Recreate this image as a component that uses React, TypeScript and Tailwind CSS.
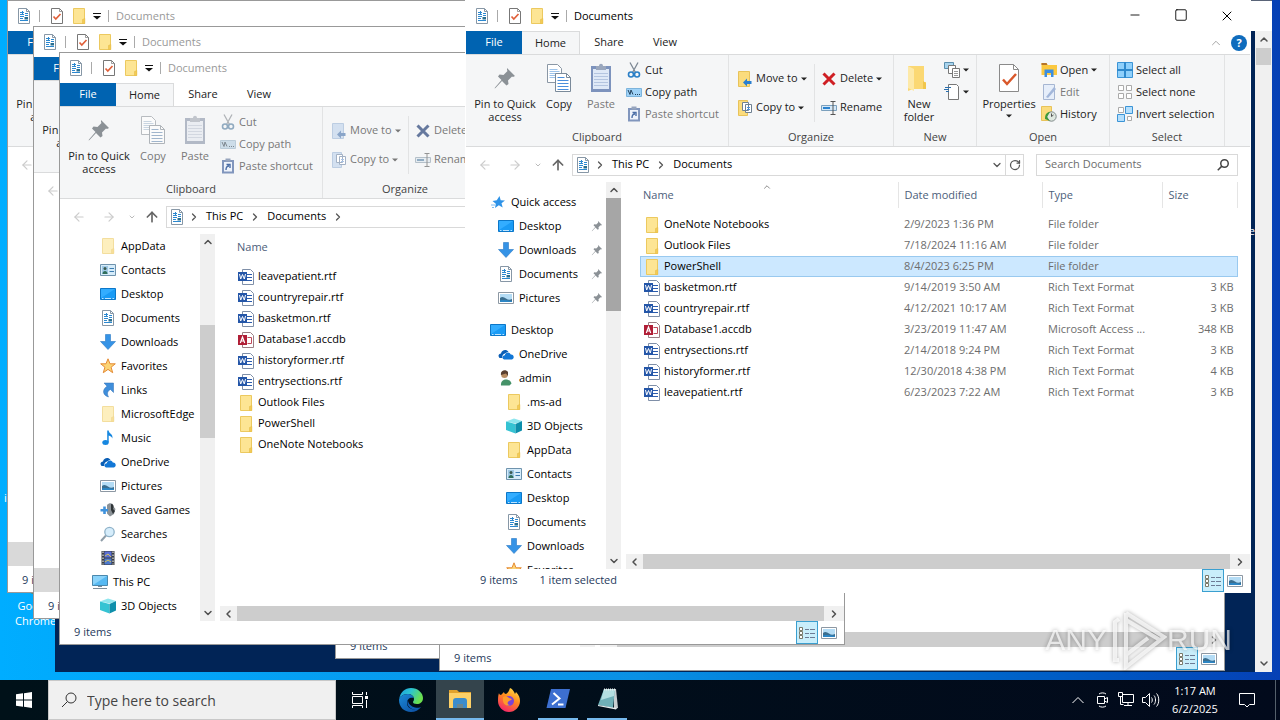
import React from 'react';
import { ChevronDown, ChevronLeft, ChevronRight, ChevronUp, Minus, Square, X, ArrowLeft, ArrowRight, ArrowUp, RotateCw } from 'lucide-react';

type IconProps = { className?: string };

interface FileItem {
  name: string;
  date: string;
  type: string;
  size: string;
  kind: 'folder' | 'word' | 'access';
}

interface NavItem {
  label: string;
  icon: React.FC<IconProps>;
  level: 0 | 1 | 2;
  pinned?: boolean;
  gap?: boolean;
}

/* ---------- icons ---------- */

const FolderIcon: React.FC<IconProps> = ({ className = 'h-4 w-4' }) => (
  <svg viewBox="0 0 16 16" className={className}>
    <path d="M2.500.500h11v15h-11z" fill="#fde594" stroke="#ecc95f" />
    <path d="M11.500 15.500v-4l2.300-1v5z" fill="#f4cb55" stroke="#e6bd4a" strokeWidth=".6" />
  </svg>
);

const PaleFolderIcon: React.FC<IconProps> = () => <FolderIcon className="h-4 w-4 opacity-60" />;

const DocumentIcon: React.FC<IconProps> = ({ className = 'h-4 w-4' }) => (
  <svg viewBox="0 0 16 16" className={className}>
    <path d="M2.5.5h8l3 3v12h-11z" fill="#fff" stroke="#8797a6" />
    <path d="M10.5.5v3h3" fill="none" stroke="#8797a6" />
    <path d="M4 4.500h4M6.500 3v4M4 6.500h4M4 8.500h4M4 10.500h3M4 12.500h8" stroke="#2b88d0" />
    <path d="M9 5.500h3M9 7.500h3" stroke="#2b88d0" />
    <path d="M8.500 9h3.500v2.500H8.500z" fill="#2a6f90" />
  </svg>
);

const CheckPageIcon: React.FC<IconProps> = ({ className = 'h-4 w-4' }) => (
  <svg viewBox="0 0 16 16" className={className}>
    <path d="M2.500.500h8l3 3v12h-11z" fill="#fff" stroke="#777" />
    <path d="M10.500.500v3h3" fill="none" stroke="#777" strokeWidth=".7" />
    <path d="m4.500 8.500 2.300 2.500L11.500 6" fill="none" stroke="#e0603a" strokeWidth="1.700" />
  </svg>
);

const PropertiesIcon: React.FC<IconProps> = () => (
  <svg viewBox="0 0 22 30" className="h-[30px] w-[22px]">
    <path d="M1.500 1.500h14l5 5v22h-19z" fill="#fff" stroke="#8a8a8a" />
    <path d="M15.500 1.500v5h5" fill="none" stroke="#8a8a8a" />
    <path d="m5 16.500 4 4.500 9-10" fill="none" stroke="#d9582b" strokeWidth="2.500" />
  </svg>
);

const DesktopIcon: React.FC<IconProps> = () => (
  <svg viewBox="0 0 16 16" className="h-4 w-4">
    <path d="M.5 2.500h15v11H.5z" fill="#1a9bf5" stroke="#0c77c8" />
    <path d="M1 3h14L1 12z" fill="#33adff" />
    <path d="M2 12.500h1.500M5 12.500h6M12.500 12.500H14" stroke="#bfe4ff" />
  </svg>
);

const DownloadsIcon: React.FC<IconProps> = () => (
  <svg viewBox="0 0 16 16" className="h-4 w-4">
    <path d="M5.500.500h5v7h5L8 15.500.500 7.500h5z" fill="#3593e6" stroke="#2a78c4" strokeWidth=".6" />
  </svg>
);

const PicturesIcon: React.FC<IconProps> = () => (
  <svg viewBox="0 0 16 16" className="h-4 w-4">
    <path d="M.5 2.500h15v11H.5z" fill="#fff" stroke="#8d98a3" />
    <path d="M2 4h12v8H2z" fill="#b4dcf5" />
    <path d="M2 8c2-2 4-1 6 .5S12 10 14 9v3H2z" fill="#3b6e8f" />
    <path d="M2 10.500c4-1 8 0 12 .5v1H2z" fill="#2c86c5" />
  </svg>
);

const ContactsIcon: React.FC<IconProps> = () => (
  <svg viewBox="0 0 16 16" className="h-4 w-4">
    <path d="M.5 2.500h15v11H.5z" fill="#d6ecfa" stroke="#6f93ad" />
    <path d="M2 4h6v8H2z" fill="#9fc9e6" />
    <circle cx="5" cy="6.500" r="1.500" fill="#3a5a50" />
    <path d="M2.500 12c0-4 5-4 5 0z" fill="#2f6e5a" />
    <path d="M9.500 6.500h4.500M9.500 9.500h4.500" stroke="#3d7db0" />
  </svg>
);

const FavoritesIcon: React.FC<IconProps> = () => (
  <svg viewBox="0 0 16 16" className="h-4 w-4">
    <path d="m8 .8 2 5h5.300l-4.200 3.400 1.600 5.500L8 11.400l-4.700 3.300 1.600-5.500L.7 5.800H6z" fill="#fcd475" stroke="#e48a35" />
  </svg>
);

const LinksIcon: React.FC<IconProps> = () => (
  <svg viewBox="0 0 16 16" className="h-4 w-4">
    <path d="M4 1h9.500v9.500l-3-3C7 9 7 12 8.500 15 3 13.500 1.500 8 7 4.200z" fill="#3f8edb" stroke="#2f6fb5" strokeWidth=".5" />
  </svg>
);

const MusicIcon: React.FC<IconProps> = () => (
  <svg viewBox="0 0 16 16" className="h-4 w-4">
    <ellipse cx="5.500" cy="12.500" rx="3.200" ry="2.500" fill="#1687e0" />
    <path d="M7.200 12.500V.5h1.500c0 3 4.800 3.500 3.600 8-.5-2-2-2.500-3.600-3v7z" fill="#1687e0" />
  </svg>
);

const OneDriveIcon: React.FC<IconProps> = () => (
  <svg viewBox="0 0 16 16" className="h-4 w-4">
    <path d="M1.500 12C-.5 10 .8 7.500 3 7.500 3.500 4 8 2.500 10.500 5.500L6 8c-1.500 1-2 2.500-1.500 4z" fill="#0a5eb5" />
    <path d="M6 13.500c-2.500-1-1.500-4.200.8-4.300C7.500 6 11.500 5.500 12.800 8.500c3.200-.3 4 4 1.200 5z" fill="#1277d6" />
  </svg>
);

const SavedGamesIcon: React.FC<IconProps> = () => (
  <svg viewBox="0 0 16 16" className="h-4 w-4">
    <path d="M7 3c2-3 7-2 6 1l2.500 3-1.500 5-4 2.500-3-3z" fill="#8b9297" />
    <path d="M11 2c3 0 3 3 2 5l2 2-2 3-2-4z" fill="#2f3437" />
    <path d="M4.500 4.500v7.500M.5 8.300h7.500" stroke="#3f92dc" strokeWidth="2.600" />
  </svg>
);

const SearchesIcon: React.FC<IconProps> = () => (
  <svg viewBox="0 0 16 16" className="h-4 w-4">
    <path d="M1 15 6 9.500" stroke="#8f9da8" strokeWidth="2" />
    <circle cx="9.500" cy="6" r="4.700" fill="#d6edfb" stroke="#8fb2c9" strokeWidth="1.300" />
  </svg>
);

const VideosIcon: React.FC<IconProps> = () => (
  <svg viewBox="0 0 16 16" className="h-4 w-4">
    <path d="M1.500 1h13v14h-13z" fill="#3a3f45" />
    <path d="M4.500 1.500h7v6h-7z" fill="#5a6fd6" />
    <path d="M4.500 8.500h7v6h-7z" fill="#4d79cf" />
    <path d="m5 6 3-2 3 3M5 12l3-2 3 2" stroke="#d6c257" fill="none" />
    <path d="M3 1.500v13M13 1.500v13" stroke="#fff" strokeDasharray="1.500 1.500" />
  </svg>
);

const ThisPcIcon: React.FC<IconProps> = () => (
  <svg viewBox="0 0 16 16" className="h-4 w-4">
    <path d="M.5 1.500h15v10H.5z" fill="#57b9f2" stroke="#4a88ad" />
    <path d="M1 2h14L1 11z" fill="#8ad3fa" />
    <path d="M6 12.500h4M1 14.500h14" stroke="#7d8d99" />
  </svg>
);

const CubeIcon: React.FC<IconProps> = () => (
  <svg viewBox="0 0 16 16" className="h-4 w-4">
    <path d="M0 3.500 8 .5l8 2.500-6 2.500z" fill="#8fe6ee" />
    <path d="M0 3.500 9.500 6v9.500L0 12z" fill="#35c3d3" />
    <path d="M9.500 6 16 3v9.500l-6.500 3z" fill="#0e8fab" />
  </svg>
);

const UserIcon: React.FC<IconProps> = () => (
  <svg viewBox="0 0 16 16" className="h-4 w-4">
    <path d="M3 15.500C2 8 12 7.500 13.500 13.500l-2 2z" fill="#459268" />
    <circle cx="6.500" cy="4.800" r="3.300" fill="#b98d62" />
    <path d="M3 5C2 0 8-1 10 2v4L8 3.500z" fill="#5a4030" />
  </svg>
);

const StarIcon: React.FC<IconProps> = () => (
  <svg viewBox="0 0 16 16" className="h-4 w-4">
    <path d="m9.500 2 1.200 4.200 4.300.3-3.500 2.700 1.200 4.300-3.900-2.200L5 14l.8-4.300L2.500 7l4.300-.7z" fill="#2e93e8" />
    <path d="M1 11h4M2 13.500h2" stroke="#7dbcf0" />
  </svg>
);

const PinIcon: React.FC<IconProps> = ({ className = 'h-6 w-6' }) => (
  <svg viewBox="0 0 24 24" className={className}>
    <path d="m14 2 8 8-2 1-1-.500-4 4 .5 3.500-2 1.500L9 15l-6.500 7-1 .500.500-1L8.500 14 5 10.500 6.500 8.500l4 .5 4-4-.5-1z" fill="#8b9196" />
  </svg>
);

const CopyIcon: React.FC<IconProps> = () => (
  <svg viewBox="0 0 26 30" className="h-[30px] w-[26px]">
    <path d="M1.500 1.500h10l4 4v14h-14z" fill="#fff" stroke="#8a97a5" />
    <path d="M3.500 6.500h8M3.500 8.500h10M3.500 10.500h10M3.500 12.500h10M3.500 14.500h10" stroke="#9dc3ea" />
    <path d="M9.500 10.500h11l4 4v14h-15z" fill="#fff" stroke="#7a8a9a" />
    <path d="M20.500 10.500v4h4" fill="none" stroke="#7a8a9a" />
    <path d="M11.500 14.500h7M11.500 17.500h11M11.500 20.500h11M11.500 23.500h11M11.500 26.500h11" stroke="#4a8fdc" />
  </svg>
);

const PasteIcon: React.FC<IconProps> = () => (
  <svg viewBox="0 0 22 30" className="h-[30px] w-[22px]">
    <path d="M1 3h20v26H1z" fill="#7d93bd" />
    <path d="M3 6h16v20H3z" fill="#dfe9f7" />
    <path d="M4 10.500h14M4 13.500h14M4 16.500h14M4 19.500h14M4 22.500h14" stroke="#b4c5e0" />
    <path d="M6 3h3c0-3 4-3 4 0h3v4H6z" fill="#9aa7bd" />
  </svg>
);

const CutIcon: React.FC<IconProps> = () => (
  <svg viewBox="0 0 16 16" className="h-4 w-4" fill="none">
    <path d="m4 .5 5.500 10M12 .5 6.500 10.500" stroke="#7d8894" strokeWidth="1.300" />
    <circle cx="5" cy="12.500" r="2.500" stroke="#2a7fc6" strokeWidth="1.600" />
    <circle cx="11" cy="12.500" r="2.500" stroke="#2a7fc6" strokeWidth="1.600" />
  </svg>
);

const CopyPathIcon: React.FC<IconProps> = () => (
  <svg viewBox="0 0 16 16" className="h-4 w-4">
    <path d="M.5 4.500h15v8H.5z" fill="#9fd2f7" stroke="#7db4dc" />
    <path d="m2 6 2 4.500L5 6l2 4.500M9 10.500h1M11 10.500h1M13 10.500h1" stroke="#23425c" fill="none" />
  </svg>
);

const PasteShortcutIcon: React.FC<IconProps> = () => (
  <svg viewBox="0 0 16 16" className="h-4 w-4">
    <path d="M2 2h12v13.500H2z" fill="#8196bd" />
    <path d="M4 4h8v9.500H4z" fill="#eef3fb" />
    <path d="M5.500.500h5v3h-5z" fill="#97a5bd" />
    <path d="M6 12c0-3 1-4 3-4M6.500 6.500H10V10" stroke="#4a6da6" strokeWidth="1.400" fill="none" />
  </svg>
);

const MoveToIcon: React.FC<{ off: boolean }> = ({ off }) => (
  <svg viewBox="0 0 16 16" className="h-4 w-4">
    <path d="M1.500.500h11v15h-11z" fill={off ? '#d3e0f0' : '#fbdc7d'} stroke={off ? '#bccde2' : '#e8c35a'} />
    <path d="m6 11.500 4-4v2.500h4.500v3H10v2.500z" fill={off ? '#8aa5c9' : '#2a7fd0'} />
  </svg>
);

const CopyToIcon: React.FC<{ off: boolean }> = ({ off }) => (
  <svg viewBox="0 0 16 16" className="h-4 w-4">
    <path d="M1.500.500h9v15h-9z" fill={off ? '#d3e0f0' : '#fbdc7d'} stroke={off ? '#bccde2' : '#e8c35a'} />
    <path d="M5.500 2.500h6v8h-6zM8.500 4.500h6v8h-6z" fill="#fff" stroke={off ? '#a3b1c4' : '#6f8192'} />
    <path d="M10 7.500h3M10 9.500h3" stroke={off ? '#a9c3e6' : '#4a8fdc'} />
  </svg>
);

const DeleteIcon: React.FC<{ off: boolean }> = ({ off }) => (
  <svg viewBox="0 0 16 16" className="h-4 w-4">
    <path d="m2.500 2.500 11 11M13.500 2.500l-11 11" stroke={off ? '#66799e' : '#cf1f24'} strokeWidth="3" />
  </svg>
);

const RenameIcon: React.FC<IconProps> = () => (
  <svg viewBox="0 0 16 16" className="h-4 w-4" fill="none">
    <path d="M.5 5.500h15v5H.5z" fill="#d4e8f8" stroke="#7ba0bd" />
    <path d="M2 7h7v2H2z" fill="#2a82cf" />
    <path d="M9.500 1.500h5M12 1.500v13M9.500 14.500h5" stroke="#555" />
  </svg>
);

const NewFolderIcon: React.FC<IconProps> = () => (
  <svg viewBox="0 0 22 28" className="mr-1 h-7 w-[22px]">
    <path d="M2 2h16v16h2v7H7L2 27z" fill="#fbd873" />
    <path d="M2 2l6 3v22l-6-3z" fill="#fde9a8" />
    <path d="M17 17l3 2v6h-3z" fill="#f1c64c" />
  </svg>
);

const NewItemIcon: React.FC<IconProps> = () => (
  <svg viewBox="0 0 16 16" className="h-4 w-4">
    <path d="M.5.500h9v6h-9z" fill="#a8d4ee" stroke="#5b8fae" />
    <path d="M4.500 3.500h7v8h-7z" fill="#fff" stroke="#777" />
    <path d="M8.500 6.500h7v9h-7z" fill="#fff" stroke="#777" />
    <path d="M10 9.500h4M10 11.500h4M10 13.500h4" stroke="#999" />
  </svg>
);

const EasyAccessIcon: React.FC<IconProps> = () => (
  <svg viewBox="0 0 16 16" className="h-4 w-4">
    <path d="M4.500.500h8l2 2v13h-10z" fill="#fff" stroke="#777" />
    <path d="M1 3.500h6M0 5.500h5M2 7.500h3" stroke="#2a6fae" />
  </svg>
);

const OpenIcon: React.FC<IconProps> = () => (
  <svg viewBox="0 0 16 16" className="h-4 w-4">
    <path d="M.5 1h5l1 2H16v10H.5z" fill="#fbc83f" />
    <path d="M.5 1h5l1 2h-6z" fill="#b5742a" />
    <path d="M3.500 15V7.500h9V15H10v-4H6v4z" fill="#3b8de0" />
  </svg>
);

const EditIcon: React.FC<IconProps> = () => (
  <svg viewBox="0 0 16 16" className="h-4 w-4">
    <path d="M2.500.500h11v15h-11z" fill="#e6eefa" stroke="#a6b6d2" />
    <path d="m5 13 8-10 2 2-8 9z" fill="#a3b7da" />
  </svg>
);

const HistoryIcon: React.FC<IconProps> = () => (
  <svg viewBox="0 0 16 16" className="h-4 w-4">
    <path d="M.5.500h10v14H.5z" fill="#fbdc7d" stroke="#e8c35a" />
    <circle cx="10.500" cy="10.500" r="4.700" fill="#dfe8e0" stroke="#7f8a8a" />
    <path d="M10.500 7.500v3l2-1.500" stroke="#555" fill="none" />
    <path d="M4 13c0-5 2-7 5-7L6 11l3 4z" fill="#3f9a3b" />
  </svg>
);

const SelectAllIcon: React.FC<IconProps> = () => (
  <svg viewBox="0 0 16 16" className="h-4 w-4">
    <path d="M.5.500h15v15H.5z" fill="#8fd0fb" stroke="#3b94d6" />
    <path d="M8 0v16M0 8h16" stroke="#2f89cc" strokeWidth="2" />
  </svg>
);

const SelectNoneIcon: React.FC<IconProps> = () => (
  <svg viewBox="0 0 16 16" className="h-4 w-4">
    <path d="M1.500 1.500h5v5h-5zM9.500 1.500h5v5h-5zM1.500 9.500h5v5h-5zM9.500 9.500h5v5h-5z" fill="#fff" stroke="#aaa" />
  </svg>
);

const InvertIcon: React.FC<IconProps> = () => (
  <svg viewBox="0 0 16 16" className="h-4 w-4">
    <path d="M1.500 1.500h5v5h-5zM10.500 10.500h4v4h-4z" fill="#fff" stroke="#aaa" />
    <path d="M8.500.500h7v7h-7zM.5 8.500h7v7h-7z" fill="#b5dffc" stroke="#3b94d6" />
  </svg>
);

const WordIcon: React.FC<IconProps> = () => (
  <svg viewBox="0 0 16 16" className="h-4 w-4">
    <path d="M4.500.500h8l3 3v12h-11z" fill="#fff" stroke="#7f8fa8" />
    <path d="M9 5.500h5M9 8.500h5M9 11.500h5" stroke="#2b5cad" />
    <path d="M0 3h9v9H0z" fill="#2456a8" />
    <path d="m1.500 5 1.200 5 1.800-4.500L6.300 10l1.200-5" stroke="#fff" fill="none" />
  </svg>
);

const AccessIcon: React.FC<IconProps> = () => (
  <svg viewBox="0 0 16 16" className="h-4 w-4">
    <path d="M4.500.500h8l3 3v12h-11z" fill="#fff" stroke="#9b8085" />
    <path d="M9.500 5.500h4v6h-4" fill="none" stroke="#c04a5a" />
    <path d="M0 3h9v10H0z" fill="#b01e36" />
    <path d="m2.300 11 2.200-6 2.200 6M3 9h3" stroke="#fff" fill="none" strokeWidth="1.200" />
  </svg>
);

const DetailsViewIcon: React.FC<IconProps> = () => (
  <svg viewBox="0 0 16 14" className="h-3.5 w-4">
    <path d="M.5 1.500h3v3h-3zM.5 5.500h3v3h-3zM.5 9.500h3v3h-3z" fill="#fff" stroke="#7a7a6a" />
    <path d="M6 3.500h4M11 3.500h5M6 7.500h4M11 7.500h5M6 11.500h4M11 11.500h5" stroke="#6d7b94" />
  </svg>
);

const MagnifierIcon: React.FC<{ className: string; width?: number }> = ({ className, width = 1 }) => (
  <svg viewBox="0 0 16 16" className={className} fill="none" stroke="currentColor" strokeWidth={width}>
    <circle cx="10" cy="6" r="5" />
    <path d="M6.500 9.500 1 15" />
  </svg>
);

const Caret: React.FC<IconProps> = () => (
  <svg viewBox="0 0 6 4" className="h-1 w-1.5 shrink-0">
    <path d="M0 .5h6L3 3.500z" fill="currentColor" />
  </svg>
);

/* ---------- data ---------- */

const files: FileItem[] = [
  { name: 'OneNote Notebooks', date: '2/9/2023 1:36 PM', type: 'File folder', size: '', kind: 'folder' },
  { name: 'Outlook Files', date: '7/18/2024 11:16 AM', type: 'File folder', size: '', kind: 'folder' },
  { name: 'PowerShell', date: '8/4/2023 6:25 PM', type: 'File folder', size: '', kind: 'folder' },
  { name: 'basketmon.rtf', date: '9/14/2019 3:50 AM', type: 'Rich Text Format', size: '3 KB', kind: 'word' },
  { name: 'countryrepair.rtf', date: '4/12/2021 10:17 AM', type: 'Rich Text Format', size: '3 KB', kind: 'word' },
  { name: 'Database1.accdb', date: '3/23/2019 11:47 AM', type: 'Microsoft Access ...', size: '348 KB', kind: 'access' },
  { name: 'entrysections.rtf', date: '2/14/2018 9:24 PM', type: 'Rich Text Format', size: '3 KB', kind: 'word' },
  { name: 'historyformer.rtf', date: '12/30/2018 4:38 PM', type: 'Rich Text Format', size: '4 KB', kind: 'word' },
  { name: 'leavepatient.rtf', date: '6/23/2023 7:22 AM', type: 'Rich Text Format', size: '3 KB', kind: 'word' },
];

const unsortedFiles = [8, 4, 3, 5, 7, 6, 1, 2, 0].map((i) => files[i]);

const fileIcons = { folder: FolderIcon, word: WordIcon, access: AccessIcon };

const quickNav: NavItem[] = [
  { label: 'Quick access', icon: StarIcon, level: 0 },
  { label: 'Desktop', icon: DesktopIcon, level: 1, pinned: true },
  { label: 'Downloads', icon: DownloadsIcon, level: 1, pinned: true },
  { label: 'Documents', icon: DocumentIcon, level: 1, pinned: true },
  { label: 'Pictures', icon: PicturesIcon, level: 1, pinned: true },
  { label: 'Desktop', icon: DesktopIcon, level: 0, gap: true },
  { label: 'OneDrive', icon: OneDriveIcon, level: 1 },
  { label: 'admin', icon: UserIcon, level: 1 },
  { label: '.ms-ad', icon: FolderIcon, level: 2 },
  { label: '3D Objects', icon: CubeIcon, level: 2 },
  { label: 'AppData', icon: FolderIcon, level: 2 },
  { label: 'Contacts', icon: ContactsIcon, level: 2 },
  { label: 'Desktop', icon: DesktopIcon, level: 2 },
  { label: 'Documents', icon: DocumentIcon, level: 2 },
  { label: 'Downloads', icon: DownloadsIcon, level: 2 },
  { label: 'Favorites', icon: FavoritesIcon, level: 2 },
];

const userNav: NavItem[] = [
  { label: 'AppData', icon: PaleFolderIcon, level: 2 },
  { label: 'Contacts', icon: ContactsIcon, level: 2 },
  { label: 'Desktop', icon: DesktopIcon, level: 2 },
  { label: 'Documents', icon: DocumentIcon, level: 2 },
  { label: 'Downloads', icon: DownloadsIcon, level: 2 },
  { label: 'Favorites', icon: FavoritesIcon, level: 2 },
  { label: 'Links', icon: LinksIcon, level: 2 },
  { label: 'MicrosoftEdge', icon: PaleFolderIcon, level: 2 },
  { label: 'Music', icon: MusicIcon, level: 2 },
  { label: 'OneDrive', icon: OneDriveIcon, level: 2 },
  { label: 'Pictures', icon: PicturesIcon, level: 2 },
  { label: 'Saved Games', icon: SavedGamesIcon, level: 2 },
  { label: 'Searches', icon: SearchesIcon, level: 2 },
  { label: 'Videos', icon: VideosIcon, level: 2 },
  { label: 'This PC', icon: ThisPcIcon, level: 1 },
  { label: '3D Objects', icon: CubeIcon, level: 2 },
];

const indents = ['pl-6', 'pl-8', 'pl-10'];

/* ---------- ribbon ---------- */

const BigButton: React.FC<{ icon: React.ReactNode; label: string; className: string; disabled?: boolean; caret?: boolean }> = ({ icon, label, className, disabled, caret }) => (
  <button className={`flex flex-col items-center pt-[7px] ${className} ${disabled ? 'text-[#787878]' : ''}`}>
    <span className="flex h-8 items-center justify-center">{icon}</span>
    <span className="mt-[3px] text-center leading-[13px]">{label}</span>
    {caret && <span className="mt-1"><Caret /></span>}
  </button>
);

const SmallButton: React.FC<{ icon: React.ReactNode; label?: string; disabled?: boolean; caret?: boolean; tall?: boolean }> = ({ icon, label, disabled, caret, tall }) => (
  <button aria-label={label || 'New item'} className={`flex items-center gap-[3px] whitespace-nowrap ${tall ? 'h-[29px]' : 'h-[22px]'} ${disabled ? 'text-[#787878]' : ''}`}>
    <span className="shrink-0">{icon}</span>
    {label}
    {caret && <Caret />}
  </button>
);

const Group: React.FC<{ label: string; className: string; children: React.ReactNode }> = ({ label, className, children }) => (
  <div className={`flex h-[91px] shrink-0 flex-col border-r border-[#e2e3e4] ${className}`}>
    <div className="flex flex-1">{children}</div>
    <div className="h-[17px] text-center leading-4 text-[#444]">{label}</div>
  </div>
);

const Ribbon: React.FC<{ active: boolean; covered: boolean }> = ({ active, covered }) => {
  const off = !active;
  const faded = off ? 'block opacity-60 saturate-50' : '';

  return (
    <div className="flex shrink-0 overflow-hidden border-y border-[#dadbdc] bg-[#f5f6f7] text-[#222]">
      <Group label="Clipboard" className="w-[263px]">
        <BigButton className="ml-1.5 w-[66px]" icon={<PinIcon />} label="Pin to Quick access" />
        <BigButton className="w-[42px]" icon={<span className={faded}><CopyIcon /></span>} label="Copy" disabled={off} />
        <BigButton className="w-[42px]" icon={<span className={faded}><PasteIcon /></span>} label="Paste" disabled />
        <div className="ml-1 pt-1">
          <SmallButton icon={<span className={faded}><CutIcon /></span>} label="Cut" disabled={off} />
          <SmallButton icon={<span className={faded}><CopyPathIcon /></span>} label="Copy path" disabled={off} />
          <SmallButton icon={<PasteShortcutIcon />} label="Paste shortcut" disabled />
        </div>
      </Group>
      {!covered && (
        <>
          <Group label="Organize" className="w-[165px]">
            <div className="mt-[9px] ml-2 h-[58px] w-[78px] border-r border-[#e2e3e4]">
              <SmallButton tall icon={<MoveToIcon off={off} />} label="Move to" caret disabled={off} />
              <SmallButton tall icon={<CopyToIcon off={off} />} label="Copy to" caret disabled={off} />
            </div>
            <div className="mt-[9px] ml-1.5">
              <SmallButton tall icon={<DeleteIcon off={off} />} label="Delete" caret disabled={off} />
              <SmallButton tall icon={<span className={faded}><RenameIcon /></span>} label="Rename" disabled={off} />
            </div>
          </Group>
          <Group label="New" className="w-[83px]">
            <BigButton className="ml-1 w-[42px]" icon={<NewFolderIcon />} label="New folder" />
            <div className="ml-1 pt-1">
              <SmallButton icon={<NewItemIcon />} caret />
              <SmallButton icon={<EasyAccessIcon />} caret />
            </div>
          </Group>
          <Group label="Open" className="w-[133px]">
            <BigButton className="ml-1 w-[56px]" icon={<PropertiesIcon />} label="Properties" caret />
            <div className="ml-1 pt-1">
              <SmallButton icon={<OpenIcon />} label="Open" caret />
              <SmallButton icon={<EditIcon />} label="Edit" disabled />
              <SmallButton icon={<HistoryIcon />} label="History" />
            </div>
          </Group>
          <Group label="Select" className="w-[115px]">
            <div className="pt-1 pl-[7px]">
              <SmallButton icon={<SelectAllIcon />} label="Select all" />
              <SmallButton icon={<SelectNoneIcon />} label="Select none" />
              <SmallButton icon={<InvertIcon />} label="Invert selection" />
            </div>
          </Group>
        </>
      )}
    </div>
  );
};

/* ---------- explorer window ---------- */

interface ExplorerProps {
  position: string;
  active?: boolean;
  // mostly hidden behind other windows, skips the file list
  covered?: boolean;
}

const Explorer: React.FC<ExplorerProps> = ({ position, active = false, covered = false }) => {
  const nav = active ? quickNav : userNav;
  const rows = active ? files : unsortedFiles;

  return (
    <section className={`absolute flex h-[593px] w-[786px] flex-col overflow-hidden border bg-white ${active ? 'border-white' : 'border-[#999]'} ${position}`}>
      <div className="flex h-[30px] shrink-0 items-center pl-2">
        <DocumentIcon />
        <span className="ml-[7px] h-3 w-px bg-[#aaa]" />
        <span className="ml-[9px]"><CheckPageIcon /></span>
        <span className="ml-1.5"><FolderIcon /></span>
        <svg viewBox="0 0 8 8" className="ml-1.5 h-2 w-2">
          <path d="M0 1.500h8" stroke="#111" />
          <path d="M0 4h8L4 7.500z" fill="#111" />
        </svg>
        <span className="ml-[7px] h-3 w-px bg-[#aaa]" />
        <h2 className={`ml-[7px] ${active ? 'text-black' : 'text-[#999]'}`}>Documents</h2>
        <div className="ml-auto flex">
          <button aria-label="Minimize" className="flex w-[46px] justify-center"><Minus className="h-3.5 w-3.5" strokeWidth={1.5} /></button>
          <button aria-label="Maximize" className="flex w-[46px] justify-center"><Square className="h-3.5 w-3.5" strokeWidth={1.5} /></button>
          <button aria-label="Close" className="flex w-[46px] justify-center"><X className="h-4 w-4" strokeWidth={1.5} /></button>
        </div>
      </div>

      <div className="flex h-[23px] shrink-0 items-stretch text-[#222]">
        <button className="w-14 bg-[#0063b1] text-white">File</button>
        <button className="-mb-px w-[58px] border-t border-r border-[#dadbdc] bg-[#f5f6f7]">Home</button>
        <button className="w-[58px]">Share</button>
        <button className="w-[54px]">View</button>
        <span className="ml-auto flex items-center gap-2 pr-[3px]">
          <ChevronUp className="h-3.5 w-3.5 text-[#999]" strokeWidth={1.5} />
          <button aria-label="Help" className="h-4 w-4 rounded-full bg-[#0f6cbd] text-[11px] leading-4 font-bold text-white">?</button>
        </span>
      </div>

      <Ribbon active={active} covered={covered} />

      <div className="flex h-[35px] shrink-0 items-center pr-3">
        <ArrowLeft className="ml-3 h-3.5 w-3.5 text-[#ccc]" strokeWidth={2} />
        <ArrowRight className="ml-4 h-3.5 w-3.5 text-[#ccc]" strokeWidth={2} />
        <ChevronDown className="ml-3 h-2 w-2 text-[#bbb]" strokeWidth={3} />
        <ArrowUp className="ml-2 h-4 w-4 text-[#666]" strokeWidth={2.5} />
        <div className="ml-1.5 flex h-[22px] flex-1 items-center border border-[#d9d9d9] pl-0.5 text-black">
          <DocumentIcon />
          <ChevronRight className="ml-[3px] h-3 w-3 text-[#555]" strokeWidth={2.5} />
          <span className="ml-1.5">This PC</span>
          <ChevronRight className="mx-1.5 h-3 w-3 text-[#555]" strokeWidth={2.5} />
          <span>Documents</span>
          {!active && <ChevronRight className="ml-1.5 h-3 w-3 text-[#555]" strokeWidth={2.5} />}
          <ChevronDown className="mr-0.5 ml-auto h-3 w-3 text-[#555]" strokeWidth={2.5} />
          <span className="flex h-full w-[18px] items-center justify-center border-l border-[#d9d9d9]">
            <RotateCw className="h-3 w-3 text-[#555]" strokeWidth={2.5} />
          </span>
        </div>
        <label className="ml-3 flex h-[22px] w-[202px] items-center border border-[#d9d9d9] px-2">
          <input type="search" aria-label="Search Documents" placeholder="Search Documents" className="min-w-0 flex-1 outline-none placeholder:text-[#6d6d6d]" />
          <MagnifierIcon className="h-3 w-3 text-[#444]" width={2} />
        </label>
      </div>

      <div className="flex min-h-0 flex-1">
        <nav className={`w-[140px] shrink-0 overflow-hidden ${active ? 'pt-2' : ''}`}>
          {covered ? (
            <div className="mt-[360px] h-6 bg-[#d9d9d9]" />
          ) : (
            nav.map((item, i) => {
              const Icon = item.icon;
              return (
                <button
                  key={i}
                  className={`flex h-6 w-full items-center gap-[5px] whitespace-nowrap text-black ${indents[item.level]} ${item.gap ? 'mt-2' : ''}`}
                >
                  <span className="shrink-0"><Icon /></span>
                  {item.label}
                  {item.pinned && <span className="mr-[3px] ml-auto"><PinIcon className="h-3 w-3" /></span>}
                </button>
              );
            })
          )}
        </nav>

        <div className="flex w-[15px] shrink-0 flex-col bg-[#f0f0f0] text-[#505050]">
          <ChevronUp className="mx-auto h-4 w-3" strokeWidth={3} />
          <div className={active ? 'h-[113px] bg-[#a6a6a6]' : 'mt-[75px] h-[113px] bg-[#cdcdcd]'} />
          <ChevronDown className="mx-auto mt-auto h-4 w-3" strokeWidth={3} />
        </div>

        <div className="flex min-w-0 flex-1 flex-col">
          <div className="flex-1 overflow-hidden pl-[19px]">
            {!covered && (
              <table className="w-[598px] table-fixed border-collapse text-left">
                <thead className="text-[#4c607a]">
                  <tr className="h-[26px]">
                    <th className="relative w-[258px] border-r border-[#e5e5e5] pl-[3px] font-normal">
                      Name
                      {active && <ChevronUp className="absolute top-0 left-[122px] h-2.5 w-2.5 text-[#777]" strokeWidth={2} />}
                    </th>
                    <th className="w-36 border-r border-[#e5e5e5] pl-1.5 font-normal">Date modified</th>
                    <th className="w-[120px] border-r border-[#e5e5e5] pl-1.5 font-normal">Type</th>
                    <th className="border-r border-[#e5e5e5] pl-1.5 font-normal">Size</th>
                  </tr>
                </thead>
                <tbody className="text-[#6d6d6d] before:block before:h-[6px]">
                  {rows.map((file) => {
                    const Icon = fileIcons[file.kind];
                    const selected = active && file.name === 'PowerShell';
                    return (
                      <tr key={file.name} className={`h-[21px] ${selected ? 'bg-[#cce8ff] outline -outline-offset-1 outline-[#99c9ef]' : ''}`}>
                        <td className="p-0 pl-1">
                          <span className="flex items-center gap-1 text-black">
                            <Icon />
                            {file.name}
                          </span>
                        </td>
                        <td className="p-0 pl-1.5">{file.date}</td>
                        <td className="p-0 pl-1.5">{file.type}</td>
                        <td className="p-0 pr-1 text-right">{file.size}</td>
                      </tr>
                    );
                  })}
                </tbody>
              </table>
            )}
          </div>
          <div className="ml-[5px] flex h-[15px] shrink-0 items-center bg-[#f0f0f0] text-[#505050]">
            <ChevronLeft className="h-3 w-[17px]" strokeWidth={3} />
            <div className="h-full flex-1 bg-[#cdcdcd]" />
            <ChevronRight className="h-3 w-5" strokeWidth={3} />
          </div>
        </div>
      </div>

      <div className="flex h-[23px] shrink-0 items-center gap-[22px] pl-3.5 text-[#1e395b]">
        <span>9 items</span>
        {active && <span>1 item selected</span>}
        <div className="ml-auto flex h-full items-center">
          <button aria-label="Details view" className="flex h-[23px] w-[22px] items-center justify-center border border-[#3a9fd0] bg-[#c9eefb]"><DetailsViewIcon /></button>
          <button aria-label="Thumbnail view" className="mr-1 flex w-[22px] justify-center"><PicturesIcon /></button>
        </div>
      </div>
    </section>
  );
};

/* ---------- taskbar ---------- */

const EdgeIcon = () => (
  <svg viewBox="0 0 24 24" className="h-6 w-6">
    <defs>
      <linearGradient id="edgeTop" x1="0" y1="0" x2="1" y2=".4">
        <stop offset="0" stopColor="#1b9de2" />
        <stop offset=".5" stopColor="#2cc4cf" />
        <stop offset="1" stopColor="#6be04e" />
      </linearGradient>
      <linearGradient id="edgeLow" x1="0" y1="0" x2="1" y2="1">
        <stop offset="0" stopColor="#1b8ad6" />
        <stop offset="1" stopColor="#0c4a9e" />
      </linearGradient>
    </defs>
    <path d="M0 12C1 4 6 0 12 0c7 0 12 5 12 10 0 4-3 6-6 6s-4-1-4-2 1-1 1-3c0-3-3-5-6-5-5 0-9 3-9 6z" fill="url(#edgeTop)" />
    <path d="M0 12c0-3 4-6 9-6 3 0 5 2 6 4-4-1-7 1-7 5 0 5 5 7 9 6 2 0 3-1 5-2-2 3-6 5-10 5C5 24 0 19 0 12z" fill="url(#edgeLow)" />
    <path d="M9 12c-2 4 1 9 6 9.500 3 .5 5-.5 7-2.500-2 1-4 1-6 .5-4-1-7-4-7-7.500z" fill="#0f5fb5" />
  </svg>
);

const ExplorerIcon = () => (
  <svg viewBox="0 0 24 24" className="h-6 w-6">
    <path d="M1 3h8l2 2h12v5H1z" fill="#e2a22c" />
    <path d="M1 6h22v15H1z" fill="#fdd067" />
    <path d="M5 21v-7c0-2 1-3 3-3h8c2 0 3 1 3 3v7h-4v-4H9v4z" fill="#3c8ccc" />
    <path d="M9 17h6v4H9z" fill="#6b8690" />
  </svg>
);

const FirefoxIcon = () => (
  <svg viewBox="0 0 24 24" className="h-6 w-6">
    <defs>
      <linearGradient id="fox" x1=".8" y1="0" x2=".3" y2="1">
        <stop offset="0" stopColor="#ffe14a" />
        <stop offset=".45" stopColor="#ff8a1e" />
        <stop offset="1" stopColor="#f5246b" />
      </linearGradient>
    </defs>
    <path d="M2 5c0 1 1 2 2 2 1-1 2-2 3-3 0 1 1 2 2 2 2-1 3-3 4-6 3 1 4 4 5 6l1-2c3 3 4 6 4 9 0 6-5 11-11 11S1 19 1 13c0-3 0-5 1-8z" fill="url(#fox)" />
    <circle cx="12" cy="13" r="5" fill="#7a43d6" />
    <path d="M6 9c2-1 4-1 6 1l3 1c-1 2-3 1-4 3-1 1 0 3 2 3-4 2-8-1-7-8z" fill="#ff9a2a" />
  </svg>
);

const PowerShellIcon = () => (
  <svg viewBox="0 0 24 20" className="h-5 w-6">
    <path d="M5 0h19l-4.500 19H.500z" fill="#3d6fd0" />
    <path d="m7.500 4 6 5.500-7.500 6" stroke="#fff" strokeWidth="2" fill="none" />
    <path d="M12 15.500h5.500" stroke="#fff" strokeWidth="2" />
  </svg>
);

const NotepadIcon = () => (
  <svg viewBox="0 0 24 24" className="h-6 w-6">
    <path d="M19 2h2l2 19-4 1z" fill="#c8cdd0" />
    <path d="M9 2h11l-2 19-15-3z" fill="#6fb0b8" />
    <path d="M9 2h11l-1 7-13 4z" fill="#b4dfe1" />
    <path d="m3 18 15 2.500 4 .500-1 1.500-18-3.500z" fill="#e9eef0" />
    <path d="M9 2.500h12" stroke="#eee" strokeDasharray="1 1" strokeWidth="2" />
  </svg>
);

const Taskbar: React.FC = () => (
  <footer className="flex h-10 shrink-0 bg-gradient-to-r from-[#001119] to-[#020a1c] text-white">
    <button aria-label="Start" className="flex w-12 items-center justify-center">
      <svg viewBox="0 0 16 16" className="h-4 w-4">
        <path d="m0 2.300 7-1v6.300H0zM8 1.200 16 0v7.600H8zM0 8.400h7v6.300l-7-1zM8 8.400h8V16l-8-1.200z" fill="#fff" />
      </svg>
    </button>
    <label className="flex w-72 items-center gap-2.5 border border-[#c8c8c8] bg-[#f0f0f0] pl-3 text-[#333]">
      <MagnifierIcon className="h-4 w-4" />
      <input type="search" aria-label="Type here to search" placeholder="Type here to search" className="min-w-0 flex-1 text-[14px] outline-none placeholder:text-[#444]" />
    </label>
    <button aria-label="Task view" className="flex w-12 items-center justify-center">
      <svg viewBox="0 0 18 16" className="h-4 w-[18px]" fill="none" stroke="#fff">
        <path d="M1.500 0v2.500h10V0M1.500 16v-2.500h10V16M1.500 4.500h10v7h-10zM15.500 0v3M15.500 8v8" />
        <path d="M14 4h3v3h-3z" fill="#fff" stroke="none" />
      </svg>
    </button>
    <button aria-label="Edge" className="ml-0.5 flex w-[50px] items-center justify-center"><EdgeIcon /></button>
    <button aria-label="File Explorer" className="flex w-12 items-center justify-center border-b-2 border-[#76b9ed] bg-[#34444c]"><ExplorerIcon /></button>
    <button aria-label="Firefox" className="flex w-[50px] items-center justify-center"><FirefoxIcon /></button>
    <button aria-label="PowerShell" className="mx-1 flex w-10 items-center justify-center border-b-2 border-[#76b9ed]"><PowerShellIcon /></button>
    <button aria-label="Notepad" className="ml-[5px] flex w-10 items-center justify-center border-b-2 border-[#76b9ed]"><NotepadIcon /></button>

    <div className="ml-auto flex items-center">
      <svg viewBox="0 0 12 8" className="h-2 w-3" fill="none" stroke="#fff"><path d="M.5 7 6 1.500 11.500 7" /></svg>
      <svg viewBox="0 0 16 16" className="ml-2.5 h-4 w-4" fill="none" stroke="#fff">
        <path d="M3.500 4.500h7v7h-7zM10.500 7l3-1.500v5l-3-1.500M5 2c2-1.500 5-1.500 7 0M5 14c2 1.500 5 1.500 7 0" />
      </svg>
      <svg viewBox="0 0 16 16" className="ml-2 h-4 w-4" fill="none" stroke="#fff">
        <path d="M4.500 2.500h11v8h-11zM.5.500h4v4h-4zM2.500 4.500v8h3M10 10.500v3M6 13.500h8" />
      </svg>
      <svg viewBox="0 0 18 16" className="ml-2 h-4 w-[18px]" fill="none" stroke="#fff">
        <path d="M.5 5.500h3l4-4v13l-4-4h-3zM9.500 5.500c1 1 1 4 0 5M12 3.500c2 2 2 7 0 9M14.500 1.500c3 3 3 10 0 13" />
      </svg>
      <div className="ml-2.5 w-[50px] text-center text-[11px] leading-[18px] whitespace-nowrap">
        <div>1:17 AM</div>
        <div>6/2/2025</div>
      </div>
      <svg viewBox="0 0 16 16" className="mr-5 ml-[19px] h-4 w-4" fill="none" stroke="#fff">
        <path d="M.5 1.500h15v11h-5l-2.500 2.500-2.500-2.500h-5z" />
      </svg>
      <span className="mr-1 h-10 w-px bg-[#55606b]" />
    </div>
  </footer>
);

const App: React.FC = () => {
  return (
    <div className="flex h-screen w-full flex-col overflow-hidden font-['Open_Sans','Noto_Sans',sans-serif] text-[11px]">
      <main className="relative flex-1 overflow-hidden bg-gradient-to-r from-[#00adff] via-[#0a90e4] to-[#0640b5]">
        {/* desktop shortcuts */}
        <span className="absolute top-[490px] left-1 text-white">i</span>
        <div className="absolute top-[556px] left-[15px] flex flex-col items-center leading-[15px] text-white">
          <svg viewBox="0 0 38 38" className="mb-1 h-[38px] w-[38px]">
            <circle cx="19" cy="19" r="19" fill="#e04a3a" />
            <path d="M19 38a19 19 0 0 0 16-28H19z" fill="#f6c02f" />
            <path d="M3 10a19 19 0 0 0 16 28l8-14z" fill="#3fa654" />
            <circle cx="19" cy="19" r="8" fill="#3f7de0" stroke="#fff" strokeWidth="2" />
          </svg>
          <span>Google</span>
          <span>Chrome</span>
        </div>

        {/* console window */}
        <section className="absolute top-0 left-[55px] flex h-[672px] w-[1217px] flex-col bg-[#012456]">
          <div className="h-[31px] shrink-0 border-t border-[#5a6478] bg-white" />
          <div className="flex min-h-0 flex-1 justify-end">
            <span className="pt-48 text-white">e</span>
            <div className="flex w-[17px] flex-col bg-[#f0f0f0] text-[#505050]">
              <ChevronUp className="mx-auto h-[17px] w-3" strokeWidth={3} />
              <div className="mx-px h-[17px] bg-[#cdcdcd]" />
              <ChevronDown className="mx-auto mt-auto h-[17px] w-3" strokeWidth={3} />
            </div>
          </div>
        </section>

        <Explorer position="top-0 left-[7px]" covered />
        <Explorer position="top-[26px] left-[33px]" covered />
        <Explorer position="top-[66px] left-[335px]" covered />
        <Explorer position="top-[78px] left-[439px]" covered />
        <Explorer position="top-[52px] left-[59px]" />
        <Explorer position="top-0 left-[465px]" active />

        {/* watermark */}
        <div className="pointer-events-none absolute right-12 bottom-2.5 flex items-center font-['Liberation_Sans',sans-serif] text-[30px] leading-none text-white/70 drop-shadow-[0_0_2px_rgba(0,0,0,0.45)]">
          <span>ANY</span>
          <svg viewBox="0 0 60 60" className="h-[60px] w-[60px]" fill="none" stroke="currentColor" strokeWidth="4">
            <path d="M19 3v42M19 3l38 24-38 30V45l22-17M19 10l34 20M12 9l-4 3v38h4" />
          </svg>
          <span>RUN</span>
        </div>
      </main>
      <Taskbar />
    </div>
  );
};

export default App;
